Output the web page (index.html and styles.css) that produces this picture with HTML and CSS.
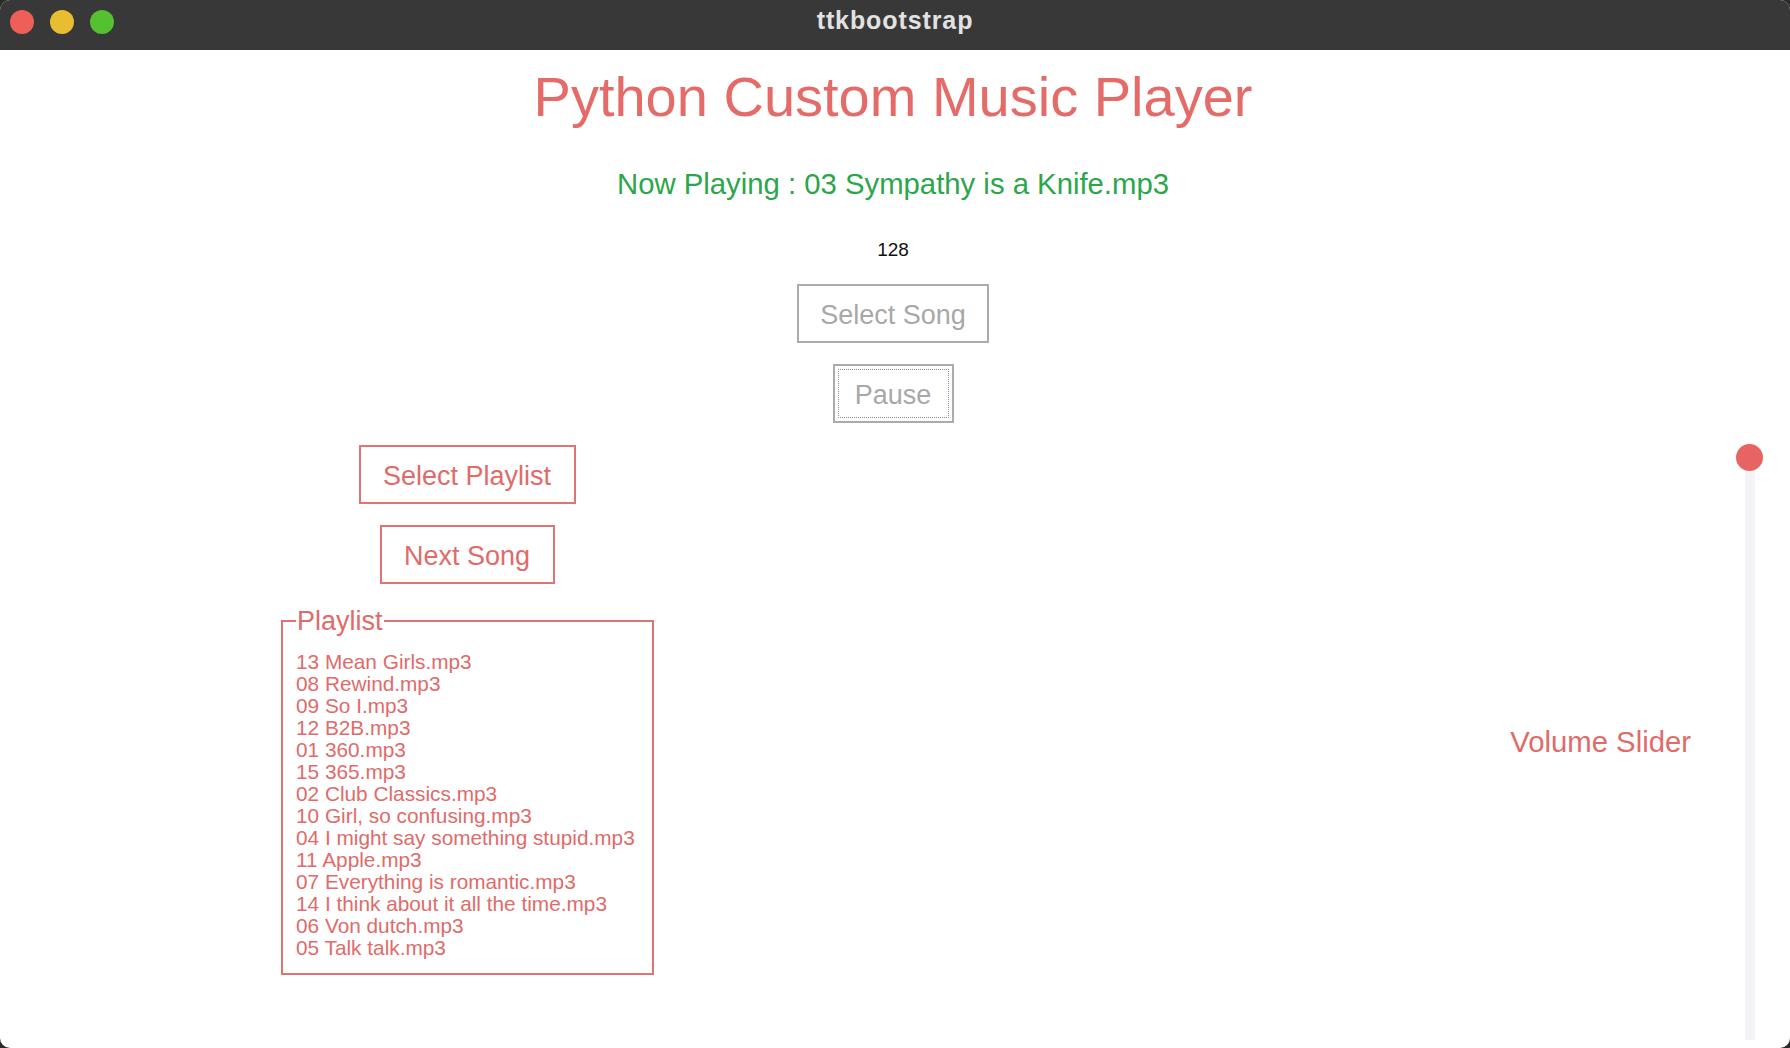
FILE: index.html
```html
<!DOCTYPE html>
<html lang="en">
<head>
<meta charset="utf-8">
<title>ttkbootstrap</title>
<link rel="stylesheet" href="styles.css">
</head>
<body>
<div class="window">
  <header class="titlebar">
    <div class="lights">
      <span class="light light-red"></span>
      <span class="light light-yellow"></span>
      <span class="light light-green"></span>
    </div>
    <div class="window-title">ttkbootstrap</div>
    <div class="titlebar-spacer"></div>
  </header>

  <main class="content">
    <h1 class="app-title">Python Custom Music Player</h1>
    <div class="now-playing">Now Playing : 03 Sympathy is a Knife.mp3</div>
    <div class="volume-value">128</div>
    <button class="btn btn-gray btn-select-song">Select Song</button>
    <button class="btn btn-gray btn-pause">Pause</button>

    <section class="lower">
      <div class="left-col">
        <button class="btn btn-red btn-select-playlist">Select Playlist</button>
        <button class="btn btn-red btn-next">Next Song</button>
        <fieldset class="playlist">
          <legend class="playlist-label">Playlist</legend>
          <ul class="playlist-items">
            <li>13 Mean Girls.mp3</li>
            <li>08 Rewind.mp3</li>
            <li>09 So I.mp3</li>
            <li>12 B2B.mp3</li>
            <li>01 360.mp3</li>
            <li>15 365.mp3</li>
            <li>02 Club Classics.mp3</li>
            <li>10 Girl, so confusing.mp3</li>
            <li>04 I might say something stupid.mp3</li>
            <li>11 Apple.mp3</li>
            <li>07 Everything is romantic.mp3</li>
            <li>14 I think about it all the time.mp3</li>
            <li>06 Von dutch.mp3</li>
            <li>05 Talk talk.mp3</li>
          </ul>
        </fieldset>
      </div>

      <div class="right-group">
        <div class="volume-label">Volume Slider</div>
        <div class="slider">
          <div class="slider-track"></div>
          <div class="slider-knob"></div>
        </div>
      </div>
    </section>
  </main>
</div>
</body>
</html>
```

FILE: styles.css
```css
* {
  box-sizing: border-box;
}

html, body {
  margin: 0;
  padding: 0;
  height: 1048px;
  overflow: hidden;
  background: #2b2b2b;
}

body {
  font-family: "Liberation Sans", Arial, Helvetica, sans-serif;
}

.window {
  display: flex;
  flex-direction: column;
  width: 1790px;
  height: 1048px;
  background: #ffffff;
  border-radius: 10px;
  overflow: hidden;
}

/* ---------- title bar ---------- */
.titlebar {
  height: 50px;
  flex: 0 0 50px;
  background: #383838;
  display: grid;
  grid-template-columns: 1fr auto 1fr;
  align-items: start;
}

.lights {
  display: flex;
  gap: 16px;
  padding: 10px 0 0 10px;
}

.light {
  width: 24px;
  height: 24px;
  border-radius: 50%;
  display: block;
}

.light-red { background: #ed5f57; }
.light-yellow { background: #e8bd31; }
.light-green { background: #55c130; }

.window-title {
  color: #e2e2e2;
  font-weight: bold;
  font-size: 25px;
  letter-spacing: 0.9px;
  line-height: 28px;
  padding-top: 6px;
}

/* ---------- content ---------- */
.content {
  flex: 1;
  display: flex;
  flex-direction: column;
  align-items: center;
  padding-right: 4px;
}

.app-title {
  margin: 15px 0 0 0;
  font-weight: normal;
  font-size: 56px;
  line-height: 64px;
  color: #e46b68;
}

.now-playing {
  margin-top: 38px;
  font-size: 29.3px;
  line-height: 34px;
  color: #2ba64a;
}

.volume-value {
  margin-top: 38px;
  font-size: 19px;
  line-height: 22px;
  color: #111111;
}

.btn {
  position: relative;
  height: 59px;
  padding: 4px 0 0 0;
  background: #ffffff;
  font-family: "Liberation Sans", Arial, Helvetica, sans-serif;
  font-size: 27px;
  line-height: 51px;
  text-align: center;
  border-width: 2px;
  border-style: solid;
  border-radius: 0;
}

.btn-gray {
  color: #a8a8a8;
  border-color: #ababab;
}

.btn-red {
  color: #e06b69;
  border-color: #e07472;
}

.btn-select-song {
  width: 192px;
  margin-top: 23px;
}

.btn-pause {
  width: 121px;
  margin-top: 21px;
}

.btn-pause::after {
  content: "";
  position: absolute;
  inset: 3px;
  border: 1px dotted #8e8e8e;
}

/* ---------- lower part ---------- */
.lower {
  align-self: stretch;
  flex: 1;
  margin-top: 13px;
  margin-right: -4px;
  display: flex;
  align-items: stretch;
}

.left-col {
  margin-left: 279px;
  width: 376px;
  padding-top: 9px;
  display: flex;
  flex-direction: column;
  align-items: center;
}

.btn-select-playlist {
  width: 217px;
}

.btn-next {
  width: 175px;
  margin-top: 21px;
}

.playlist {
  align-self: flex-start;
  margin: 22px 0 0 2px;
  width: 373px;
  padding: 15px 13px 14px 13px;
  border: 2px solid #e07472;
  min-width: 0;
}

.playlist-label {
  padding: 0 1px;
  font-size: 27px;
  line-height: 30px;
  color: #e06b69;
}

.playlist-items {
  list-style: none;
  margin: 0;
  padding: 0;
}

.playlist-items li {
  font-size: 20.8px;
  line-height: 22px;
  color: #e06b69;
  white-space: nowrap;
}

.right-group {
  margin-left: auto;
  margin-right: 27px;
  display: flex;
  align-items: center;
  gap: 45px;
}

.volume-label {
  font-size: 29.3px;
  line-height: 34px;
  color: #e06b69;
}

.slider {
  position: relative;
  align-self: stretch;
  width: 27px;
  margin: 8px 0 8px 0;
  display: flex;
  justify-content: center;
}

.slider-track {
  width: 10px;
  height: 100%;
  background: #f4f4f8;
}

.slider-knob {
  position: absolute;
  top: 0;
  left: 0;
  width: 27px;
  height: 27px;
  border-radius: 50%;
  background: #e86462;
}
```
